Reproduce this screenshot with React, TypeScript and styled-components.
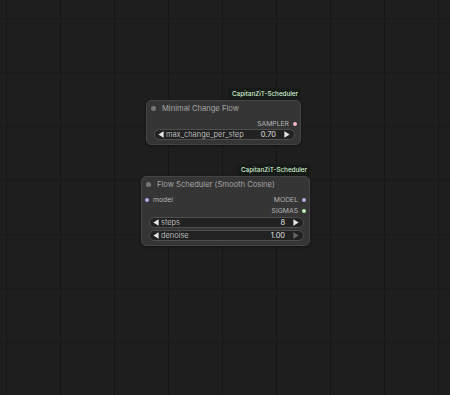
import React from "react";
import styled, { createGlobalStyle } from "styled-components";

const GlobalStyle = createGlobalStyle`
  html, body {
    margin: 0;
    padding: 0;
    background: #1e1e1e;
  }
  body {
    font-family: Inter, "Noto Sans", "Liberation Sans", sans-serif;
  }
`;

const Canvas = styled.div`
  position: relative;
  width: 450px;
  height: 395px;
  overflow: hidden;
  background-color: #1e1e1e;
  background-image:
    linear-gradient(to right, rgba(0, 0, 0, 0.26) 1px, transparent 1px),
    linear-gradient(to bottom, rgba(0, 0, 0, 0.14) 1px, transparent 1px);
  background-size: 54px 54px;
  background-position: 6px 18px;
`;

const Node = styled.div<{ $x: number; $y: number; $w: number }>`
  position: absolute;
  left: ${(p) => p.$x}px;
  top: ${(p) => p.$y}px;
  width: ${(p) => p.$w}px;
  box-sizing: border-box;
  background: #353535;
  border: 1px solid #444;
  border-radius: 5px;
  padding-bottom: 4px;
  box-shadow: 0 1px 3px rgba(0, 0, 0, 0.45);
`;

const Badge = styled.div`
  position: absolute;
  right: -1px;
  bottom: calc(100% + 1px);
  padding: 1px 3px 1px 4px;
  background: #171b17;
  color: #d2f0d2;
  font-size: 6.3px;
  font-weight: 500;
  line-height: 10px;
  white-space: nowrap;
  border-radius: 2px;
`;

const Title = styled.div`
  display: flex;
  align-items: center;
  gap: 6px;
  height: 15px;
  padding-left: 4px;
  color: #a6a6a6;
  font-size: 7.6px;
  white-space: nowrap;
`;

const TitleDot = styled.span`
  width: 5px;
  height: 5px;
  border-radius: 50%;
  background: #777;
  flex: none;
`;

const SlotRow = styled.div`
  display: flex;
  align-items: center;
  justify-content: space-between;
  height: 11px;
  padding: 0 3px;
  font-size: 6.8px;
  color: #b4b4b4;
`;

const Slot = styled.div`
  display: flex;
  align-items: center;
  gap: 4px;
`;

const SlotDot = styled.span<{ $color: string }>`
  width: 4px;
  height: 4px;
  border-radius: 50%;
  background: ${(p) => p.$color};
  flex: none;
`;

const Widgets = styled.div`
  display: flex;
  flex-direction: column;
  gap: 2px;
  padding: 0 5px 0 7px;
`;

const Widget = styled.div`
  display: flex;
  align-items: center;
  height: 11px;
  box-sizing: border-box;
  padding: 0 4px 0 3px;
  background: #222;
  border: 1px solid #4e4e4e;
  border-radius: 6px;
  font-size: 7.4px;
  color: #c4c4c4;
`;

const WidgetName = styled.span`
  flex: 1;
  margin-left: 2px;
  color: #b8b8b8;
`;

const WidgetValue = styled.span`
  margin-right: 8px;
  color: #e0e0e0;
`;

const Arrow = ({ dir, dim }: { dir: "l" | "r"; dim?: boolean }) => (
  <svg width="6" height="7" viewBox="0 0 6 7" style={{ flex: "none" }}>
    <polygon
      points={dir === "l" ? "5.6,0.3 0.4,3.5 5.6,6.7" : "0.4,0.3 5.6,3.5 0.4,6.7"}
      fill={dim ? "#666" : "#e6e6e6"}
    />
  </svg>
);

const NumberWidget = ({ name, value, dimRight }: { name: string; value: string; dimRight?: boolean }) => (
  <Widget>
    <Arrow dir="l" />
    <WidgetName>{name}</WidgetName>
    <WidgetValue>{value}</WidgetValue>
    <Arrow dir="r" dim={dimRight} />
  </Widget>
);

const App = () => {
  return (
    <>
      <GlobalStyle />
      <Canvas>
        <Node $x={146} $y={100} $w={155}>
          <Badge>CapitanZiT-Scheduler</Badge>
          <Title>
            <TitleDot />
            Minimal Change Flow
          </Title>
          <SlotRow style={{ marginTop: 2 }}>
            <span />
            <Slot>
              SAMPLER
              <SlotDot $color="#f0b8c8" />
            </Slot>
          </SlotRow>
          <Widgets>
            <NumberWidget name="max_change_per_step" value="0.70" />
          </Widgets>
        </Node>

        <Node $x={141} $y={176} $w={169}>
          <Badge>CapitanZiT-Scheduler</Badge>
          <Title>
            <TitleDot />
            Flow Scheduler (Smooth Cosine)
          </Title>
          <SlotRow style={{ marginTop: 2 }}>
            <Slot>
              <SlotDot $color="#b0a8e8" />
              model
            </Slot>
            <Slot>
              MODEL
              <SlotDot $color="#b0a8e8" />
            </Slot>
          </SlotRow>
          <SlotRow>
            <span />
            <Slot>
              SIGMAS
              <SlotDot $color="#b8f0b0" />
            </Slot>
          </SlotRow>
          <Widgets style={{ paddingTop: 1 }}>
            <NumberWidget name="steps" value="8" />
            <NumberWidget name="denoise" value="1.00" dimRight />
          </Widgets>
        </Node>
      </Canvas>
    </>
  );
};

export default App;
